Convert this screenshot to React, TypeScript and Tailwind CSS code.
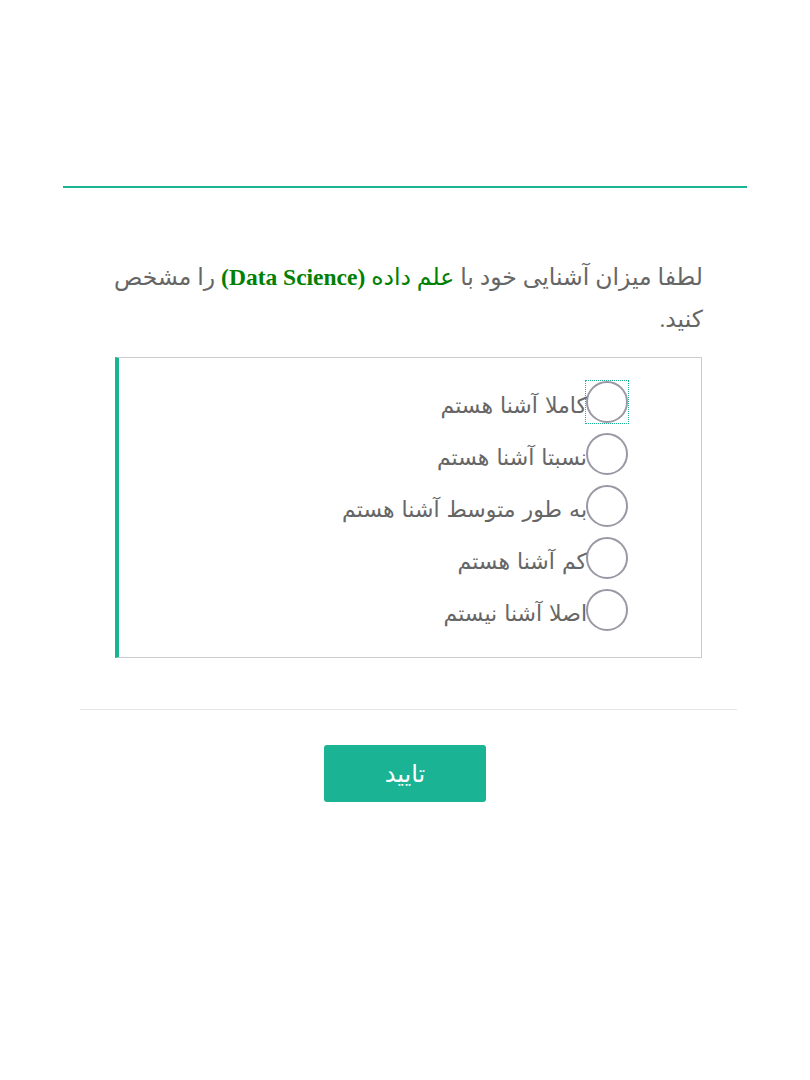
import React from "react";

const options = [
  "کاملا آشنا هستم",
  "نسبتا آشنا هستم",
  "به طور متوسط آشنا هستم",
  "کم آشنا هستم",
  "اصلا آشنا نیستم",
];

export default function App() {
  return (
    <div
      dir="rtl"
      className="w-[810px] h-[1080px] bg-white"
      style={{ fontFamily: "'DejaVu Sans', 'Noto Sans', sans-serif" }}
    >
      <div className="pt-[186px] px-[63px]">
        <div className="h-[2px] bg-[#1ab394]" />
      </div>
      <div className="pt-[68px] pr-[107px] pl-[100px]">
        <p
          className="text-[23.5px] leading-[42px] text-[#666666]"
          style={{ fontFamily: "'Liberation Serif', 'DejaVu Sans', serif" }}
        >
          لطفا میزان آشنایی خود با{" "}
          <span className="text-[#008000]">
            علم داده <span className="font-bold">(Data Science)</span>
          </span>{" "}
          را مشخص کنید.
        </p>
      </div>
      <div className="mt-[17px] mr-[108px] ml-[115px] h-[301px] border border-[#cccccc] border-l-4 border-l-[#1ab394] pr-[72px] pt-[23px]">
        <div className="flex flex-col gap-[10px]">
          {options.map((o, i) => (
            <label key={o} className="flex items-center h-[42px] cursor-pointer">
              <span
                className={
                  "shrink-0 w-[44px] h-[44px] flex items-center justify-center " +
                  (i === 0 ? "border border-dotted border-[#1ab394]" : "")
                }
              >
                <span className="w-[42px] h-[42px] rounded-full border-2 border-[#9a98a4] bg-white" />
              </span>
              <span className="text-[22px] text-[#666666] pt-[6px] -mr-[2px]">{o}</span>
            </label>
          ))}
        </div>
      </div>
      <div className="mt-[51px] mr-[73px] ml-[80px] h-px bg-[#e5e5e5]" />
      <div className="flex justify-center mt-[35px]">
        <button className="w-[162px] h-[57px] rounded-[3px] bg-[#1ab394] text-white text-[24px]">
          تایید
        </button>
      </div>
    </div>
  );
}
